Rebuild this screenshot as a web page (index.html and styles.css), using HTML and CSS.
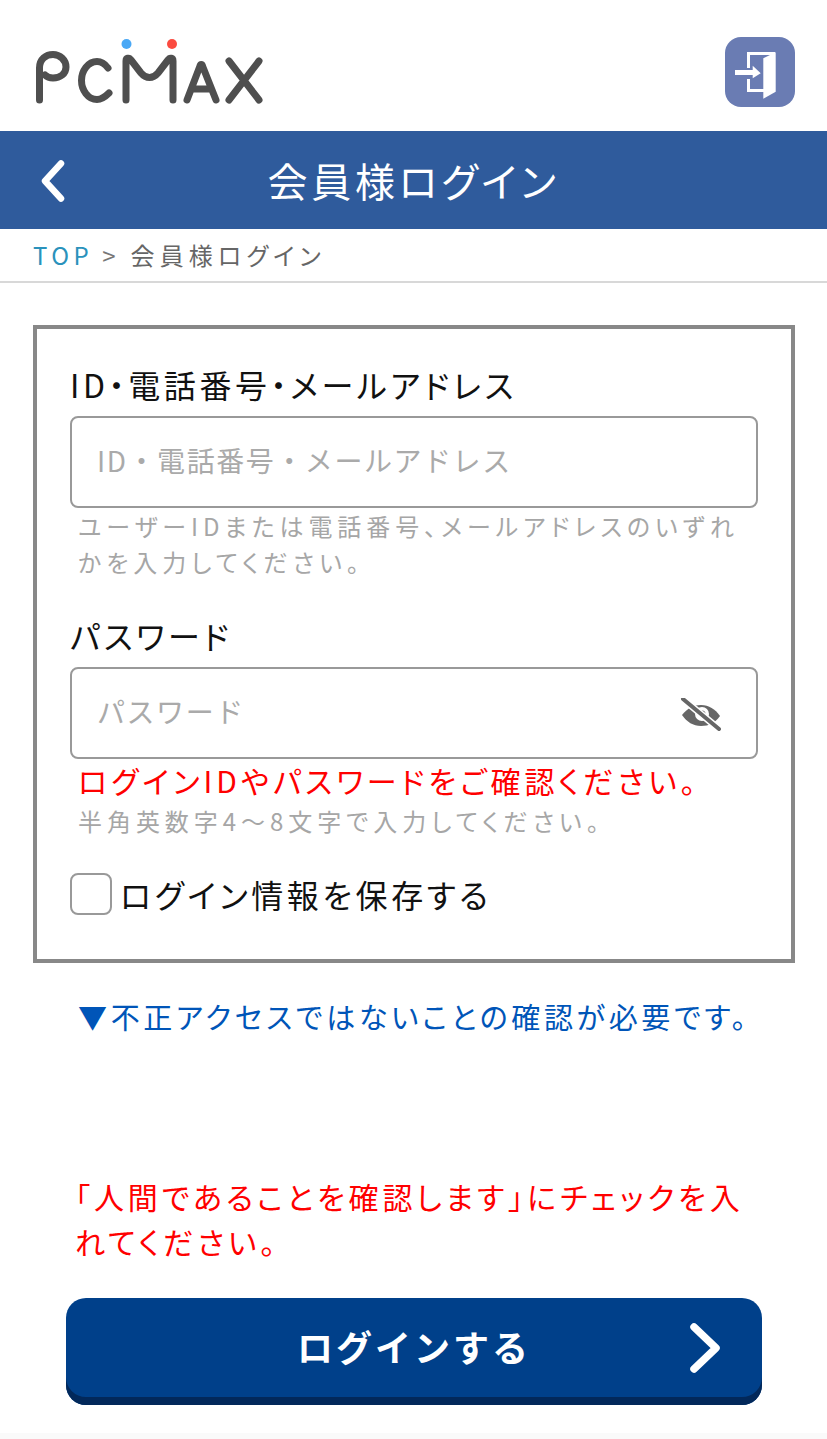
FILE: index.html
```html
<!DOCTYPE html>
<html lang="ja">
<head>
<meta charset="utf-8">
<title>会員様ログイン</title>
<link rel="stylesheet" href="styles.css">
</head>
<body>
<header class="top">
  <svg class="logo" width="228" height="70" viewBox="0 0 228 70" aria-label="PCMAX">
    <circle cx="91.500" cy="7" r="5" fill="#4aa8f5"/>
    <circle cx="137" cy="7" r="5" fill="#fb4b40"/>
    <g fill="none" stroke="#4f4f4f" stroke-width="7" stroke-linecap="round" stroke-linejoin="round">
      <path d="M4.500 63V31C4.500 22 11 17.500 18 17.500C25 17.500 31 23 31 30C31 37 25 41 18 41C15 41 12 40 10 38"/>
      <path d="M73 31C70 27 66 24.500 62 24.500C53 24.500 46.500 34 46.500 43.500C46.500 53 53 62.500 62 62.500C66 62.500 70 60 74 56"/>
      <path d="M91 63V24C91 21 94 20 96 23L106 36C111 42 118 42 123 36L133 23C135 20 138 21 138 24V63"/>
      <path d="M152 63L165 29C165.500 27 167 27 167.500 29L181 63M158 52H176"/>
      <path d="M194 24L224 63M224 24L194 63"/>
    </g>
  </svg>
  <a class="login-icon" href="#" aria-label="ログイン">
    <svg width="70" height="70" viewBox="0 0 70 70">
      <path d="M23.500 31V16.500H50M23.500 42V53.500H40" fill="none" stroke="#fff" stroke-width="3"/>
      <path d="M38.300 21.300L50.700 15.300V54.700L38.300 61.700Z" fill="#fff"/>
      <path d="M10 33H27.700V28.700L35.700 36.300L27.700 41.300V38H10Z" fill="#fff"/>
    </svg>
  </a>
</header>
<nav class="titlebar">
  <svg class="back" width="26" height="42" viewBox="0 0 26 42"><path d="M21 3.500L5 21L21 38.500" fill="none" stroke="#fff" stroke-width="6.500" stroke-linecap="round" stroke-linejoin="round"/></svg>
  <h1 class="title">会員様ログイン</h1>
</nav>
<div class="crumbs"><a class="crumb-top" href="#">TOP</a><span class="crumb-sep">&gt;</span><span class="crumb-cur">会員様ログイン</span></div>
<main class="main">
  <form class="box">
    <label class="label">ID・電話番号・メールアドレス</label>
    <div class="input"><span class="ph">ID・電話番号・メールアドレス</span></div>
    <p class="hint hint-id">ユーザーIDまたは電話番号、メールアドレスのいずれかを入力してください。</p>
    <label class="label label-pw">パスワード</label>
    <div class="input input-pw">
      <span class="ph">パスワード</span>
      <svg width="42" height="34" viewBox="0 0 42 34">
        <path d="M2 17C8 10 13 7 21 7C29 7 35 11 40 18C35 25 29 28 21 28C13 28 7 24 2 17Z" fill="#666"/>
        <circle cx="22" cy="16" r="7" fill="#fff"/>
        <circle cx="22" cy="16" r="3.500" fill="#666"/>
        <path d="M3 1L39 31" stroke="#fff" stroke-width="7"/>
        <path d="M3 1L39 31" stroke="#666" stroke-width="4" stroke-linecap="round"/>
      </svg>
    </div>
    <p class="error">ログインIDやパスワードをご確認ください。</p>
    <p class="hint hint-pw">半角英数字4～8文字で入力してください。</p>
    <div class="save"><span class="check"></span><span class="save-text">ログイン情報を保存する</span></div>
  </form>
  <p class="notice">▼不正アクセスではないことの確認が必要です。</p>
  <p class="warn">「人間であることを確認します」にチェックを入れてください。</p>
  <button class="submit" type="button">
    <span>ログインする</span>
    <svg class="chev" width="32" height="50" viewBox="0 0 32 50"><path d="M5 4L27 25L5 46" fill="none" stroke="#fff" stroke-width="7.500" stroke-linecap="round" stroke-linejoin="round"/></svg>
  </button>
</main>
<footer class="foot"></footer>
</body>
</html>
```
FILE: styles.css
```css
* { box-sizing: border-box; }
html, body { margin: 0; padding: 0; }
body {
  width: 827px;
  height: 1439px;
  overflow: hidden;
  background: #fff;
  color: #111;
  font-family: "Noto Sans CJK JP", "Noto Sans", sans-serif;
  font-feature-settings: "palt";
}
.top {
  height: 131px;
  display: flex;
  justify-content: space-between;
  padding: 37px 32px 0 35px;
}
.logo { display: block; }
.login-icon {
  display: block;
  width: 70px;
  height: 70px;
  background: #6a7cb3;
  border-radius: 16px;
}
.login-icon svg { display: block; }
.titlebar {
  height: 98px;
  background: #2f5b9c;
  display: flex;
  align-items: center;
  justify-content: center;
  position: relative;
}
.back { position: absolute; left: 40px; top: 29px; }
.title {
  margin: 0;
  font-size: 40px;
  font-weight: 400;
  letter-spacing: 3.700px;
  color: #fff;
}
.crumbs {
  height: 54px;
  border-bottom: 2px solid #d8d8d8;
  padding-left: 33px;
  display: flex;
  align-items: center;
  font-size: 24px;
  letter-spacing: 4.500px;
  color: #666;
  padding-bottom: 2px;
}
.crumb-top { color: #2a92bc; text-decoration: none; }
.crumb-sep { margin: 0 15px 0 9px; color: #777; letter-spacing: 0; }
.crumb-cur { letter-spacing: 5.100px; }
.main { padding: 42px 32px 0 33px; }
.box {
  border: 4px solid #888;
  height: 638px;
  padding: 33px 33px 0;
}
.label {
  display: block;
  font-size: 32px;
  line-height: 44px;
  letter-spacing: 3.600px;
}
.input {
  height: 92px;
  border: 2px solid #999;
  border-radius: 8px;
  margin-top: 10px;
  padding: 0 25px;
  display: flex;
  align-items: center;
  justify-content: space-between;
}
.ph {
  font-size: 28px;
  letter-spacing: 1.550px;
  color: #aaa;
  margin-top: -5px;
  font-feature-settings: normal;
}
.input-pw svg { margin-right: 9px; margin-top: 4px; }
.hint {
  margin: 0;
  padding: 0 8px;
  font-size: 24px;
  line-height: 36px;
  letter-spacing: 4.950px;
  color: #a6a6a6;
}
.hint-id { margin-top: 0; }
.label-pw { margin-top: 33px; }
.error {
  margin: -1px 0 0;
  padding-left: 8px;
  font-size: 30px;
  line-height: 44px;
  letter-spacing: 4px;
  color: #f00;
}
.hint-pw { margin-top: 1px; }
.save {
  display: flex;
  align-items: center;
  margin-top: 32px;
}
.check {
  width: 42px;
  height: 42px;
  border: 2px solid #999;
  border-radius: 8px;
}
.save-text {
  margin-left: 8px;
  font-size: 32px;
  letter-spacing: 3.600px;
}
.notice {
  margin: 30px 0 0;
  padding-left: 45px;
  font-size: 29px;
  line-height: 46px;
  letter-spacing: 3.650px;
  color: #0055b8;
  white-space: nowrap;
}
.warn {
  margin: 135px 0 0;
  padding-left: 42px;
  width: 722px;
  font-size: 30px;
  line-height: 45px;
  letter-spacing: 3.900px;
  color: #f00;
}
.submit {
  display: flex;
  align-items: center;
  justify-content: center;
  position: relative;
  width: 696px;
  height: 107px;
  margin: 34px 0 0 33px;
  padding: 0 0 12px;
  border: 0;
  border-radius: 20px;
  background: #00408a;
  box-shadow: inset 0 -8px 0 #02285a;
  color: #fff;
  font-family: inherit;
  font-size: 36px;
  font-weight: 700;
  letter-spacing: 3px;
}
.chev { position: absolute; right: 41px; top: 25px; }
.foot {
  height: 12px;
  margin-top: 28px;
  background: #fafafa;
}
```
